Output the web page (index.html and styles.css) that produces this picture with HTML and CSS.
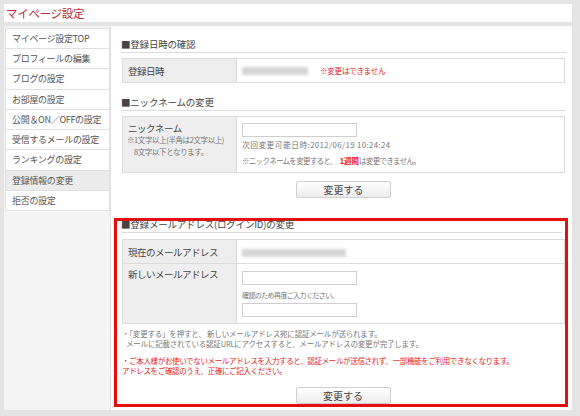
FILE: index.html
```html
<!DOCTYPE html>
<html lang="ja">
<head>
<meta charset="utf-8">
<title>マイページ設定</title>
<link rel="stylesheet" href="styles.css">
</head>
<body>
<div class="page">
  <div class="header"><h1 class="title">マイページ設定</h1></div>
  <div class="main">
    <ul class="side">
      <li class="side-item">マイページ設定TOP</li>
      <li class="side-item">プロフィールの編集</li>
      <li class="side-item">ブログの設定</li>
      <li class="side-item">お部屋の設定</li>
      <li class="side-item">公開＆ON／OFFの設定</li>
      <li class="side-item">受信するメールの設定</li>
      <li class="side-item">ランキングの設定</li>
      <li class="side-item active">登録情報の変更</li>
      <li class="side-item">拒否の設定</li>
    </ul>
    <div class="content">
      <section class="sec">
        <h2 class="sec-title">■登録日時の確認</h2>
        <table class="tbl">
          <tr class="row-24">
            <th class="lab">登録日時</th>
            <td class="val"><span class="blur blur-date"></span><span class="red-note">※変更はできません</span></td>
          </tr>
        </table>
      </section>

      <section class="sec">
        <h2 class="sec-title">■ニックネームの変更</h2>
        <table class="tbl">
          <tr class="row-nick">
            <th class="lab lab-nick">
              <div class="lab-main">ニックネーム</div>
              <div class="lab-sub">※1文字以上(半角は2文字以上)</div>
              <div class="lab-sub indent">8文字以下となります。</div>
            </th>
            <td class="val val-nick">
              <div class="input"></div>
              <div class="tiny next">次回変更可能日時:2012/06/19 10:24:24</div>
              <div class="tiny gap">※ニックネームを変更すると、 <span class="hl">1週間</span>は変更できません。</div>
            </td>
          </tr>
        </table>
        <div class="btn-row"><button class="btn">変更する</button></div>
      </section>

      <section class="sec sec-red">
        <h2 class="sec-title red-title">■登録メールアドレス(ログインID)の変更</h2>
        <table class="tbl tbl-mail">
          <tr class="row-24">
            <th class="lab">現在のメールアドレス</th>
            <td class="val"><span class="blur blur-mail"></span></td>
          </tr>
          <tr class="row-mail">
            <th class="lab lab-top">新しいメールアドレス</th>
            <td class="val val-mail">
              <div class="input"></div>
              <div class="tiny confirm">確認のため再度ご入力ください。</div>
              <div class="input"></div>
            </td>
          </tr>
        </table>
        <div class="notes">
          <p class="note">・「変更する」を押すと、 新しいメールアドレス宛に認証メールが送られます。</p>
          <p class="note ind">メールに記載されている認証URLにアクセスすると、メールアドレスの変更が完了します。</p>
          <p class="note warn first-warn">・ご本人様がお使いでないメールアドレスを入力すると、認証メールが送信されず、一部機能をご利用できなくなります。</p>
          <p class="note warn">アドレスをご確認のうえ、正確にご記入ください。</p>
        </div>
        <div class="btn-row btn-row-red"><button class="btn">変更する</button></div>
      </section>
    </div>
  </div>
</div>
</body>
</html>
```

FILE: styles.css
```css
* { box-sizing: border-box; }
html, body { margin: 0; padding: 0; }
body {
  width: 580px;
  height: 416px;
  background: #e4e4e4;
  font-family: "Noto Sans CJK JP", "Noto Sans", sans-serif;
  color: #444;
  overflow: hidden;
}
.page { padding: 4px 8px 0 4px; }
.header {
  background: #fff;
  height: 18px;
  display: flex;
  align-items: center;
  padding-left: 2px;
}
.title {
  margin: 0;
  font-size: 11.5px;
  font-weight: normal;
  color: #b5303a;
  line-height: 16px;
  letter-spacing: -0.3px;
}
.main {
  margin-top: 4px;
  display: flex;
  height: 384px;
  background: #fff;
}
.side {
  list-style: none;
  margin: 0;
  padding: 2px 0 0 1px;
  width: 107px;
  flex: 0 0 107px;
  background: #f4f4f4;
  border-right: 1px solid #e2e2e2;
}
.side-item {
  height: 20.3px;
  line-height: 19px;
  font-size: 9px;
  color: #555;
  background: #fff;
  border: 1px solid #e0e0e0;
  border-top: none;
  padding-left: 6px;
  white-space: nowrap;
  letter-spacing: -0.3px;
}
.side-item:first-child { border-top: 1px solid #e0e0e0; height: 21px; }
.side-item.active { background: #ececec; }
.content {
  flex: 1 1 auto;
  min-width: 0;
  padding: 11px 6px 0 10px;
}
.sec { margin: 0; }
.sec + .sec { margin-top: 12px; }
.sec-title {
  margin: 0;
  font-size: 9.5px;
  font-weight: normal;
  color: #444;
  line-height: 14px;
  padding-bottom: 1px;
  border-bottom: 1px solid #dcdcdc;
  letter-spacing: -0.2px;
}
.tbl {
  margin-top: 5px;
  margin-left: 1px;
  width: 443px;
  border-collapse: collapse;
  border: 1px solid #dcdcdc;
}
.tbl th, .tbl td {
  border: 1px solid #dcdcdc;
  padding: 0;
}
.lab {
  width: 114px;
  background: #eeeeee;
  text-align: left;
  font-weight: normal;
  font-size: 9.5px;
  color: #444;
  padding-left: 5px !important;
  vertical-align: middle;
  letter-spacing: -0.5px;
}
.lab-top { vertical-align: top; padding-top: 4px !important; line-height: 13px; }
.lab-nick { vertical-align: top; padding-top: 5px !important; padding-left: 4px !important; }
.lab-main { font-size: 9.5px; line-height: 12px; padding-left: 1px; }
.lab-sub { font-size: 7.5px; line-height: 11.5px; color: #777; letter-spacing: -0.4px; }
.lab-sub.indent { padding-left: 7px; }
.val {
  padding-left: 5px !important;
  vertical-align: middle;
  font-size: 8px;
}
.val-nick { vertical-align: top; padding-top: 6px !important; }
.val-mail { vertical-align: top; padding-top: 7px !important; }
.row-24 { height: 24px; }
.row-nick { height: 56px; }
.row-mail { height: 60px; }
.blur {
  display: inline-block;
  height: 8px;
  background: #d6d6d6;
  filter: blur(1.5px);
  vertical-align: middle;
}
.blur-date { width: 66px; margin-right: 12px; }
.blur-mail { width: 104px; }
.red-note { color: #e31d1d; font-size: 7.5px; vertical-align: middle; letter-spacing: -0.2px; }
.input {
  width: 115px;
  height: 14px;
  border: 1px solid #cfcfcf;
  background: #fff;
}
.tiny { font-size: 7.5px; line-height: 10px; color: #777; letter-spacing: -0.3px; }
.tiny.next { margin-top: 3px; font-size: 7.8px; letter-spacing: 0.4px; }
.tiny.gap { margin-top: 6px; letter-spacing: -0.7px; }
.tiny.confirm { font-size: 7px; margin-top: 5px; margin-bottom: 3px; letter-spacing: -0.6px; }
.hl { color: #e31d1d; font-weight: bold; letter-spacing: 0; margin-left: 2px; }
.btn-row {
  display: flex;
  justify-content: center;
  margin-top: 8px;
}
.btn {
  width: 95px;
  height: 17px;
  border: 1px solid #cfcfcf;
  border-radius: 2px;
  background: linear-gradient(#ffffff, #ececec);
  font-family: "Noto Sans CJK JP", sans-serif;
  font-size: 10px;
  color: #444;
  padding: 0;
  line-height: 15px;
}
.sec-red {
  margin-left: -7px;
  margin-right: -2px;
  border: 3px solid #e50f0f;
  padding: 0 0 0 4px;
  margin-top: 20px !important;
}
.red-title {
  margin-top: -3px;
  line-height: 12px;
  padding-bottom: 2px;
  margin-right: 3px;
}
.tbl-mail { margin-top: 6px; }
.notes { margin-top: 5px; padding-left: 1px; }
.note {
  margin: 0;
  font-size: 7.5px;
  line-height: 10px;
  color: #777;
  letter-spacing: -0.2px;
  white-space: nowrap;
}
.note.ind { padding-left: 4px; }
.note.warn { color: #e31d1d; letter-spacing: -0.35px; }
.note.first-warn { margin-top: 7px; }
.btn-row-red { margin-top: 11px; }
```
